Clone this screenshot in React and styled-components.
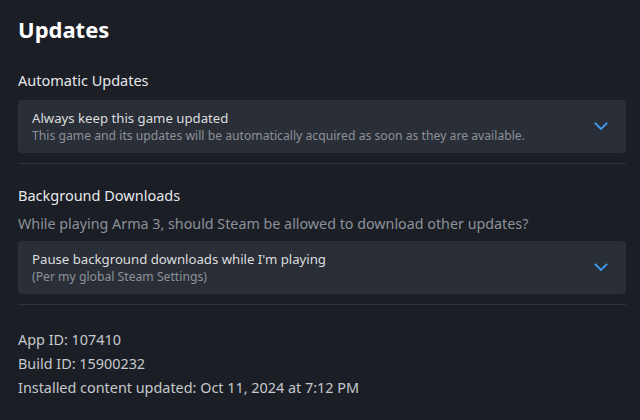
import React from "react";
import styled, { createGlobalStyle } from "styled-components";

const Global = createGlobalStyle`
  html, body { margin: 0; padding: 0; background: #1b1e25; }
  body { font-family: "Noto Sans", "Open Sans", sans-serif; color: #dcdedf; }
`;

const Page = styled.div`
  width: 640px;
  height: 420px;
  box-sizing: border-box;
  padding: 14px 14px 0 18px;
  background: #1b1e25;
  overflow: hidden;
`;

const Title = styled.h1`
  margin: 0;
  font-size: 22px;
  font-weight: 700;
  color: #ffffff;
  line-height: 30px;
`;

const Section = styled.section`
  display: flex;
  flex-direction: column;
  padding-top: ${(p) => p.$top}px;
  padding-bottom: 10px;
  border-bottom: ${(p) => (p.$divider ? "1px solid #2e323a" : "none")};
`;

const Heading = styled.div`
  font-size: 14.5px;
  line-height: 20px;
  color: #e6e8ea;
  margin-bottom: ${(p) => p.$gap}px;
`;

const Desc = styled.div`
  font-size: 14.3px;
  line-height: 20px;
  color: #8b929a;
  margin-bottom: 7px;
`;

const Dropdown = styled.div`
  display: flex;
  align-items: center;
  justify-content: space-between;
  height: 53px;
  box-sizing: border-box;
  padding: 0 18px 0 14px;
  background: #2a2e36;
  border-radius: 3px;
`;

const DropText = styled.div`
  display: flex;
  flex-direction: column;
  padding-top: 1px;
`;

const DropMain = styled.div`
  font-size: 13.2px;
  line-height: 18px;
  color: #dcdedf;
`;

const DropSub = styled.div`
  font-size: 12.2px;
  line-height: 18px;
  color: #8b929a;
`;

const Info = styled.div`
  display: flex;
  flex-direction: column;
  padding-top: 23px;
  font-size: 14.4px;
  line-height: 24px;
  color: #c6c9cc;
`;

const Chevron = () => (
  <svg width="14" height="9" viewBox="0 0 14 9" fill="none">
    <path d="M1.5 1.5 L7 7 L12.5 1.5" stroke="#3d9ef5" strokeWidth="1.8" strokeLinecap="square" />
  </svg>
);

export default function App() {
  return (
    <Page>
      <Global />
      <Title>Updates</Title>
      <Section $top={26} $divider>
        <Heading $gap={10}>Automatic Updates</Heading>
        <Dropdown>
          <DropText>
            <DropMain>Always keep this game updated</DropMain>
            <DropSub>This game and its updates will be automatically acquired as soon as they are available.</DropSub>
          </DropText>
          <Chevron />
        </Dropdown>
      </Section>
      <Section $top={21} $divider>
        <Heading $gap={9}>Background Downloads</Heading>
        <Desc>While playing Arma 3, should Steam be allowed to download other updates?</Desc>
        <Dropdown>
          <DropText>
            <DropMain>Pause background downloads while I'm playing</DropMain>
            <DropSub>(Per my global Steam Settings)</DropSub>
          </DropText>
          <Chevron />
        </Dropdown>
      </Section>
      <Info>
        <div>App ID: 107410</div>
        <div>Build ID: 15900232</div>
        <div>Installed content updated: Oct 11, 2024 at 7:12 PM</div>
      </Info>
    </Page>
  );
}
